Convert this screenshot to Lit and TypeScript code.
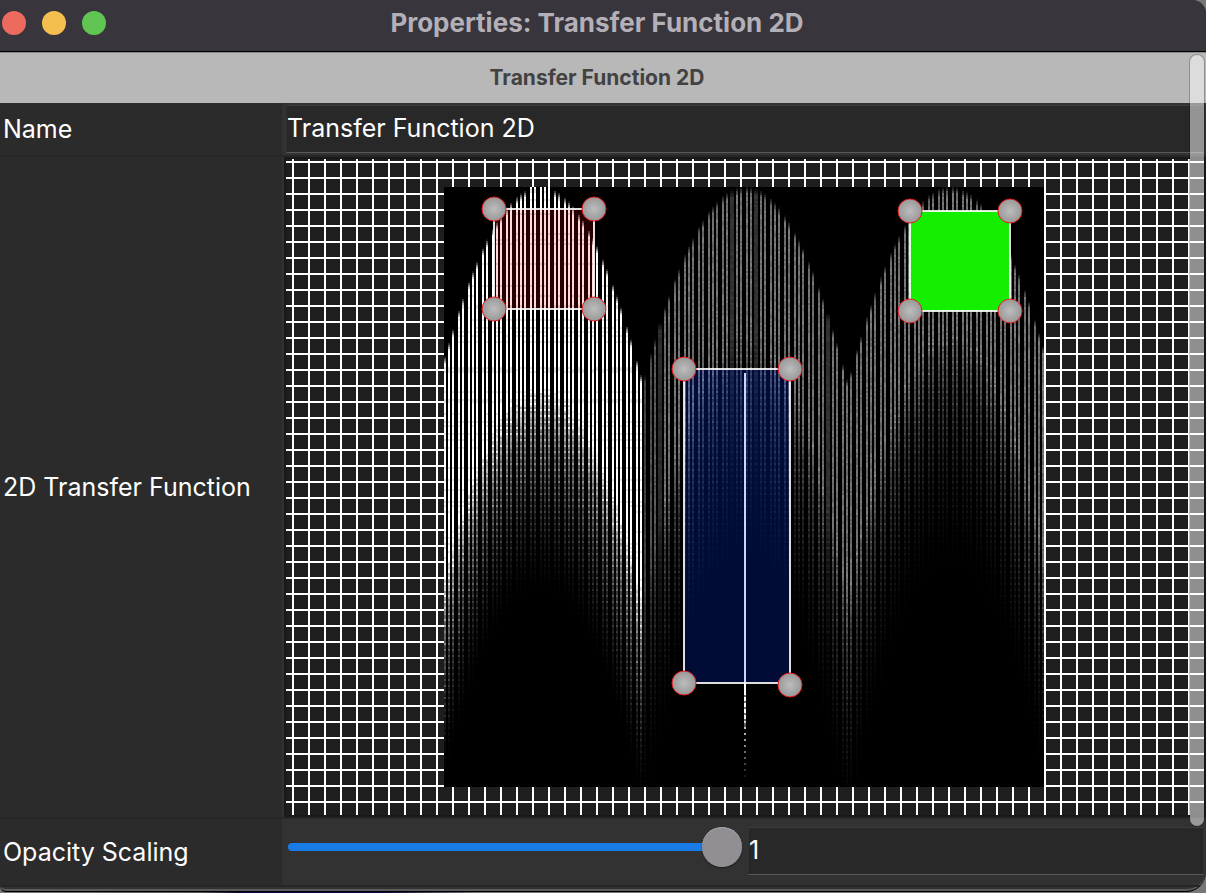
import { LitElement, html, css, svg } from "lit";
import { customElement, property, query, state } from "lit/decorators.js";

type Point = [number, number];

interface Region {
  name: string;
  fill: string;
  box: [number, number, number, number];
  handles: Point[];
}

const REGIONS: Region[] = [
  { name: "red", fill: "rgba(255, 0, 0, 0.15)", box: [50, 22, 100, 100], handles: [[50, 22], [150, 22], [50, 122], [150, 122]] },
  { name: "blue", fill: "rgba(0, 56, 255, 0.21)", box: [240, 182, 106, 314], handles: [[240, 182], [346, 182], [240, 496], [346, 498]] },
  { name: "green", fill: "#14ee00", box: [466, 24, 100, 100], handles: [[466, 24], [566, 24], [466, 124], [566, 124]] },
];

// Occupied bins of the 300 x 300 histogram; a half value is spread over two bins.
const BINS = [
  0, 2, 4, 7, 9, 12, 14, 16, 19, 21, 24, 26, 28, 31, 33, 36, 38, 40, 43, 45, 48, 50, 52, 55, 57,
  60, 62, 64, 67, 69, 72, 74, 76, 79, 81, 84, 86, 88, 91, 93, 96, 98, 100, 103, 105, 107.5, 110, 112,
  115, 117, 120, 122, 124, 127, 129, 132, 134, 136, 139, 141, 143.5, 146, 148, 151, 153, 155.5,
  158, 160, 163, 165, 167, 170, 172, 175, 177, 179, 182, 184, 187, 189, 191.5, 194, 196, 199, 201,
  203, 206, 208, 211, 213, 215, 218, 220, 223, 225, 227, 230, 232, 235, 237, 239, 242, 244, 247,
  249, 251, 254, 256, 259, 261, 263, 266, 268, 271, 273, 275, 278, 280, 283, 285, 287, 290, 292,
  295, 297, 299,
];

const LOBES = [
  { centre: 47.75, level: 255, fadeStart: 100, fadeCurve: 0.041, fadeLength: 100 },
  { centre: 150.25, level: 118, fadeStart: 72, fadeCurve: 0.05, fadeLength: 116 },
  { centre: 252.75, level: 118, fadeStart: 72, fadeCurve: 0.05, fadeLength: 116 },
];

const FADE: Point[] = [[0, 1], [0.1, 0.74], [0.25, 0.46], [0.45, 0.27], [0.65, 0.13], [0.85, 0.04], [1, 0]];

function noise(x: number, y: number): number {
  const n = Math.sin(x * 127.1 + y * 311.7) * 43758.5453;
  return n - Math.floor(n);
}

function fadeAt(t: number): number {
  if (t <= 0) return 1;
  if (t >= 1) return 0;
  for (let i = 1; i < FADE.length; i++) {
    if (t <= FADE[i][0]) {
      const [t0, v0] = FADE[i - 1];
      const [t1, v1] = FADE[i];
      return v0 + ((t - t0) / (t1 - t0)) * (v1 - v0);
    }
  }
  return 0;
}

@customElement("histogram-view")
class HistogramView extends LitElement {
  @query("canvas") private surface!: HTMLCanvasElement;

  static styles = css`
    :host { display: block; position: relative; width: 600px; max-width: 100%; aspect-ratio: 1; }
    .surface { display: block; width: 100%; height: 100%; background: #000; image-rendering: pixelated; }
    .overlay { position: absolute; inset: 0; width: 100%; height: 100%; overflow: visible; }
  `;

  firstUpdated() {
    const context = this.surface.getContext("2d")!;
    const image = context.createImageData(300, 300);
    const put = (x: number, y: number, value: number) => {
      const at = (y * 300 + x) * 4;
      const v = Math.max(0, Math.min(255, value));
      image.data[at] = image.data[at + 1] = image.data[at + 2] = v;
    };
    for (let i = 3; i < image.data.length; i += 4) image.data[i] = 255;

    for (const bin of BINS) {
      const lobe = bin < 99 ? LOBES[0] : bin < 202 ? LOBES[1] : LOBES[2];
      const bright = lobe.level === 255;
      const offset = bin - lobe.centre;
      const top = 0.0374 * offset * offset;
      const start = lobe.fadeStart + lobe.fadeCurve * offset * offset;
      const split = bin % 1 !== 0;
      const columns = split ? [Math.floor(bin), Math.ceil(bin)] : [bin];
      const edge = bin > 98 && bin < 110 ? 0.5 + (bin - 98) * 0.04 : 1;
      for (const x of columns) {
        for (let y = Math.max(0, Math.floor(top)); y < 300; y++) {
          const t = (y - start) / lobe.fadeLength;
          const rise = bright && top < 1 ? 1 : Math.min(1, (y - top + 1) / 4);
          const grain = noise(x, y);
          let value = lobe.level * fadeAt(t) * rise * edge;
          if (split) value *= 0.45;
          if (bright && t < 0) {
            value *= noise(7, y) > 0.72 && grain > 0.3 ? 0.88 : 1;
          } else if (t < 0) {
            value *= 0.78 + 0.3 * grain;
          } else {
            const contrast = Math.min(0.6, 0.1 + t * 0.8);
            value *= 1 + (y % 3 === 0 ? contrast : -contrast / 2);
            value *= 0.8 + 0.35 * grain;
          }
          put(x, y, value);
        }
      }
    }

    for (let y = 93; y < 297; y++) {
      const lit = y < 252 || y % 3 === 0 || (y < 266 && y % 3 === 1);
      const level = y < 262 ? 255 : 255 * (1 - (y - 262) / 36);
      put(150, y, lit ? level : y < 270 ? level * 0.45 : 0);
    }
    context.putImageData(image, 0, 0);
  }

  render() {
    return html`
      <canvas class="surface" width="300" height="300" role="img" aria-label="2D histogram"></canvas>
      <svg class="overlay" viewBox="0 0 600 600" aria-hidden="true">
        <defs>
          <radialGradient id="knob">
            <stop offset="0" stop-color="#bdbdbd"></stop>
            <stop offset="1" stop-color="#989898"></stop>
          </radialGradient>
        </defs>
        ${REGIONS.map(
          (r) => svg`
            <rect x=${r.box[0]} y=${r.box[1]} width=${r.box[2]} height=${r.box[3]}
              fill=${r.fill} stroke="#ffffff" stroke-opacity="0.87" stroke-width="2"></rect>
            ${r.handles.map(
              ([x, y]) => svg`<circle cx=${x} cy=${y} r="12" fill="url(#knob)" stroke="#e8191c" stroke-width="1"></circle>`
            )}`
        )}
      </svg>
    `;
  }
}

@customElement("app-root")
class AppRoot extends LitElement {
  @property() name = "Transfer Function 2D";
  @state() private opacity = 1;

  static styles = css`
    :host {
      display: block;
      box-sizing: border-box;
      min-height: 100vh;
      padding-bottom: 1px;
      background: linear-gradient(to right, #777 0, #555 200px, #05053a 240px, #05053a 380px, #777 480px);
      color: #fff;
      font-family: Inter, "Liberation Sans", sans-serif;
      font-size: 25px;
      line-height: 32px;
    }
    * { box-sizing: border-box; }
    .window {
      position: relative;
      overflow: hidden;
      background: #323232;
      border-bottom: 1px solid #000;
      border-radius: 0 14px 20px 6px;
    }
    .frame { border-bottom: 2px solid #5c5c5c; border-radius: 0 0 20px 6px; padding-bottom: 2px; }
    .titlebar {
      display: grid;
      grid-template-columns: 1fr auto 1fr;
      align-items: center;
      height: 52px;
      padding: 0 14px 6px 2px;
      background: #39353c;
      border-bottom: 1px solid #000;
    }
    .lights { display: flex; gap: 16px; }
    .light { width: 24px; height: 24px; padding: 0; border: 0; border-radius: 50%; }
    .close { background: #ed6a5f; }
    .minimise { background: #f5bf4f; }
    .zoom { background: #61c554; }
    .title { margin: 0; font-size: 26px; font-weight: 700; color: #b4b0b8; }
    .section {
      margin: 0;
      padding: 9px 12px 9px 0;
      border-top: 1px solid #8c8a8d;
      background: #b8b8b8;
      color: #424242;
      font-size: 21px;
      font-weight: 700;
      text-align: center;
    }
    .row { display: grid; grid-template-columns: 282px minmax(0, 1fr); border-bottom: 2px solid #272727; }
    .label { display: flex; align-items: center; padding-left: 3px; background: #2b2b2b; }
    .value { padding: 2px 2px 2px 4px; }
    .panel { padding: 0 0 0 2px; }
    .scaling { display: grid; grid-template-columns: 1fr 1fr; gap: 6px; padding: 8px 2px 10px 4px; }
    .field {
      display: block;
      width: 100%;
      height: 48px;
      margin: 0;
      padding: 0 0 2px;
      border: 1px solid #303030;
      border-top-color: #3c3c3c;
      border-bottom-color: #5a5a5a;
      border-radius: 0;
      background: #282828;
      color: #fff;
      font: inherit;
      outline: none;
    }
    .grid {
      display: flex;
      justify-content: center;
      padding: 28px 2px 28px 0;
      border: 2px solid #191919;
      background-color: #1e1e1e;
      background-image:
        linear-gradient(to right, #fff 2px, transparent 2px),
        linear-gradient(to bottom, #fff 2px, transparent 2px);
      background-size: 16px 16px;
      background-position: 6px 2px;
    }
    .slider { -webkit-appearance: none; appearance: none; width: 100%; height: 40px; margin: 0; background: none; }
    .slider::-webkit-slider-runnable-track {
      height: 8px;
      border-radius: 4px;
      background: linear-gradient(#187be6, #187be6) no-repeat;
      margin-left: 2px;
    }
    .slider::-webkit-slider-thumb {
      -webkit-appearance: none;
      width: 40px;
      height: 40px;
      margin-top: -16px;
      border-radius: 50%;
      background: #918f94;
      box-shadow: 0 1px 2px rgba(0, 0, 0, 0.4), inset 0 1px 0 #a5a3a8;
    }
    .scrollbar {
      position: absolute;
      top: 55px;
      right: 2px;
      bottom: 65px;
      width: 14px;
      border-radius: 7px;
      background: rgba(255, 255, 255, 0.5);
      box-shadow: 0 0 0 1px rgba(0, 0, 0, 0.22);
    }
  `;

  private setOpacity(event: Event) {
    this.opacity = Number((event.target as HTMLInputElement).value);
  }

  render() {
    return html`
      <main class="window">
        <header class="titlebar">
          <div class="lights">
            <button class="light close" aria-label="Close"></button>
            <button class="light minimise" aria-label="Minimise"></button>
            <button class="light zoom" aria-label="Zoom"></button>
          </div>
          <h1 class="title">Properties: Transfer Function 2D</h1>
        </header>
        <div class="frame">
          <h2 class="section">Transfer Function 2D</h2>
          <div class="row">
            <label class="label" for="name">Name</label>
            <div class="value"><input class="field" id="name" type="text" .value=${this.name} /></div>
          </div>
          <div class="row">
            <div class="label">2D Transfer Function</div>
            <div class="panel"><div class="grid"><histogram-view></histogram-view></div></div>
          </div>
          <div class="row">
            <label class="label" for="opacity">Opacity Scaling</label>
            <div class="scaling">
              <input class="slider" type="range" min="0" max="1" step="0.01" aria-label="Opacity Scaling slider"
                .value=${String(this.opacity)} @input=${this.setOpacity} />
              <input class="field" id="opacity" type="text" inputmode="decimal"
                .value=${String(this.opacity)} @change=${this.setOpacity} />
            </div>
          </div>
        </div>
        <div class="scrollbar"></div>
      </main>
    `;
  }
}
